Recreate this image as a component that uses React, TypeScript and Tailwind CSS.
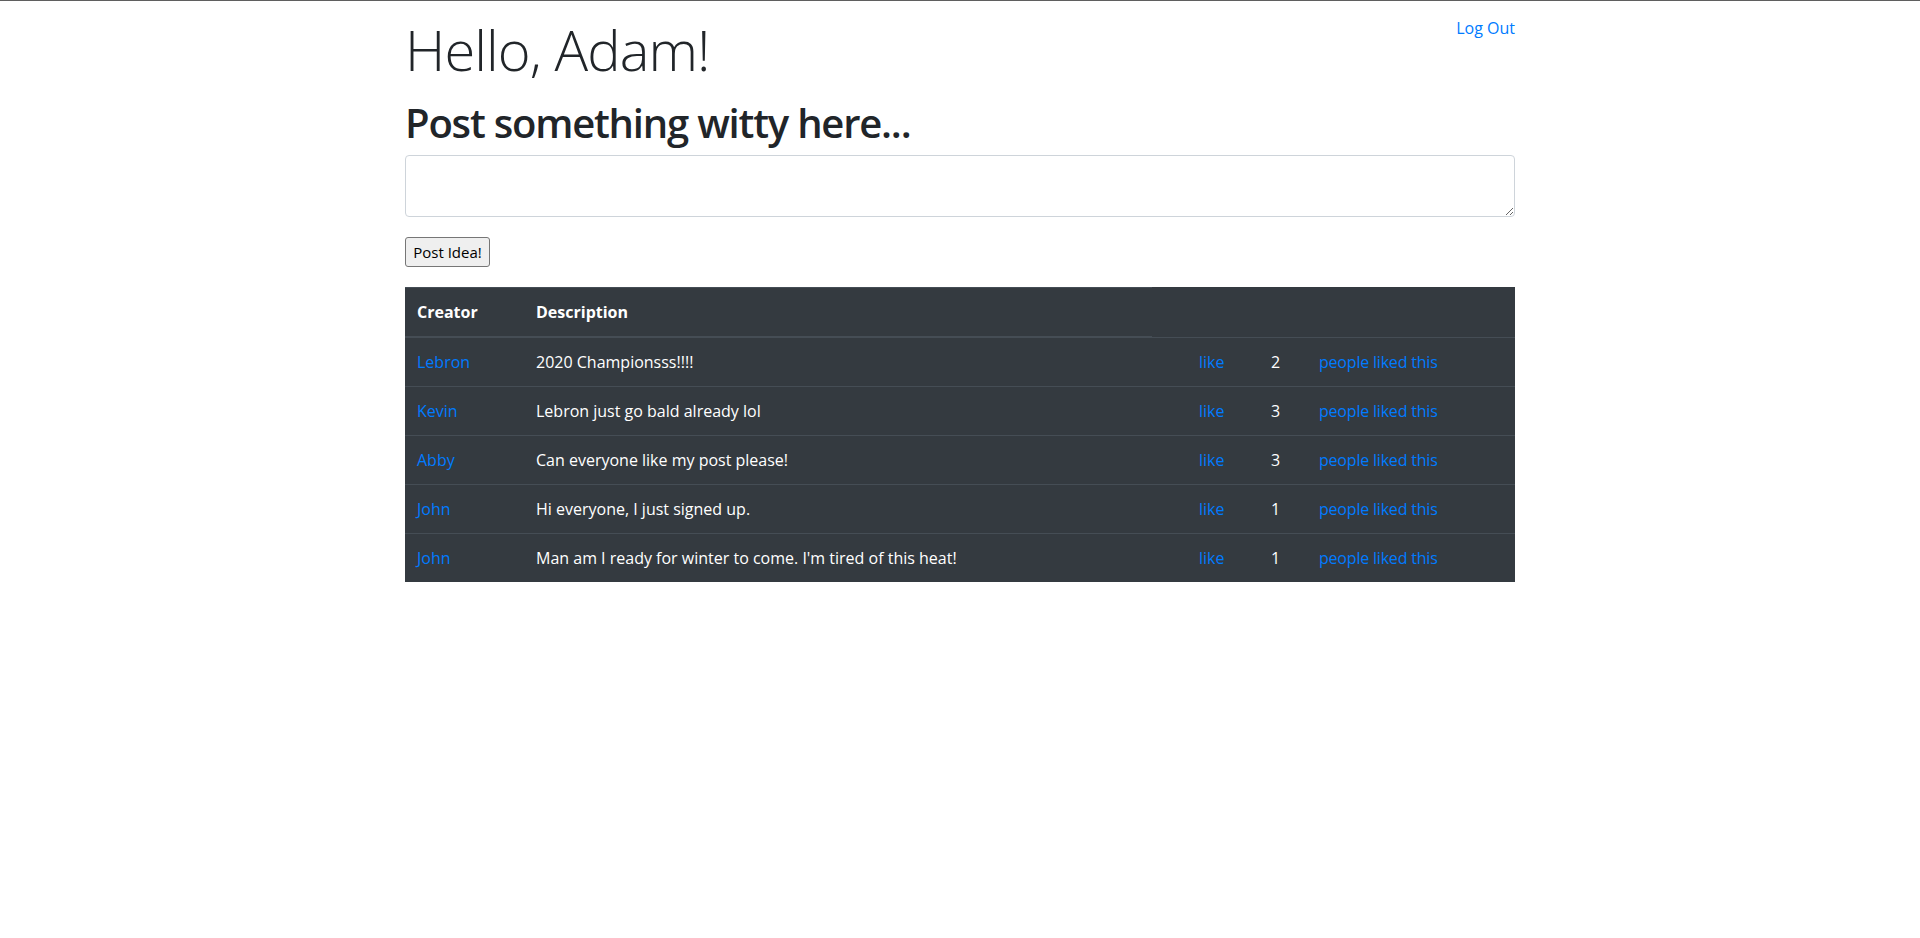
const posts = [
  { creator: "Lebron", text: "2020 Championsss!!!!", likes: 2 },
  { creator: "Kevin", text: "Lebron just go bald already lol", likes: 3 },
  { creator: "Abby", text: "Can everyone like my post please!", likes: 3 },
  { creator: "John", text: "Hi everyone, I just signed up.", likes: 1 },
  { creator: "John", text: "Man am I ready for winter to come. I'm tired of this heat!", likes: 1 },
];

export default function App() {
  return (
    <div className="min-h-screen bg-white border-t border-[#5f5f5f] font-['Open_Sans',sans-serif] text-[#212529] text-base leading-6">
      <div className="mx-auto w-[1140px] px-[15px]">
        {/* Greeting */}
        <div className="flex justify-between items-start pt-[15px]">
          <h1 className="text-[56px] leading-[1.2] font-light tracking-[-0.9px]">Hello, Adam!</h1>
          <a href="#" className="text-[#007bff] hover:underline">Log Out</a>
        </div>

        {/* Post form */}
        <h2 className="mt-[16px] text-[40px] leading-[48px] font-semibold tracking-[-1.2px]">Post something witty here...</h2>
        <form className="mt-2">
          <textarea
            rows={2}
            className="block w-full h-[62px] rounded border border-[#ced4da] px-3 py-[6px] text-[#495057] outline-none"
          />
          <button
            type="button"
            className="mt-5 w-[85px] h-[30px] rounded-[3px] border border-[#767676] bg-[#efefef] text-center text-[15px] text-black"
          >
            Post Idea!
          </button>
        </form>

        {/* Ideas table */}
        <table className="mt-5 w-full border-collapse bg-[#343a40] text-white table-fixed">
          <colgroup>
            <col className="w-[119px]" />
            <col className="w-[628px]" />
            <col className="w-[35px]" />
            <col className="w-[72px]" />
            <col className="w-[48px]" />
            <col />
          </colgroup>
          <thead>
            <tr>
              <th className="border-t border-b-2 border-[#454d55] p-3 text-left font-bold">Creator</th>
              <th className="border-t border-b-2 border-[#454d55] p-3 text-left font-bold">Description</th>
            </tr>
          </thead>
          <tbody>
            {posts.map((p, i) => (
              <tr key={i}>
                <td className="border-t border-[#454d55] p-3">
                  <a href="#" className="text-[#007bff]">{p.creator}</a>
                </td>
                <td className="border-t border-[#454d55] p-3 whitespace-nowrap">{p.text}</td>
                <td className="border-t border-[#454d55] p-3" />
                <td className="border-t border-[#454d55] p-3">
                  <a href="#" className="text-[#007bff]">like</a>
                </td>
                <td className="border-t border-[#454d55] p-3">{p.likes}</td>
                <td className="border-t border-[#454d55] p-3">
                  <a href="#" className="text-[#007bff] tracking-[-0.2px]">people liked this</a>
                </td>
              </tr>
            ))}
          </tbody>
        </table>
      </div>
    </div>
  );
}
